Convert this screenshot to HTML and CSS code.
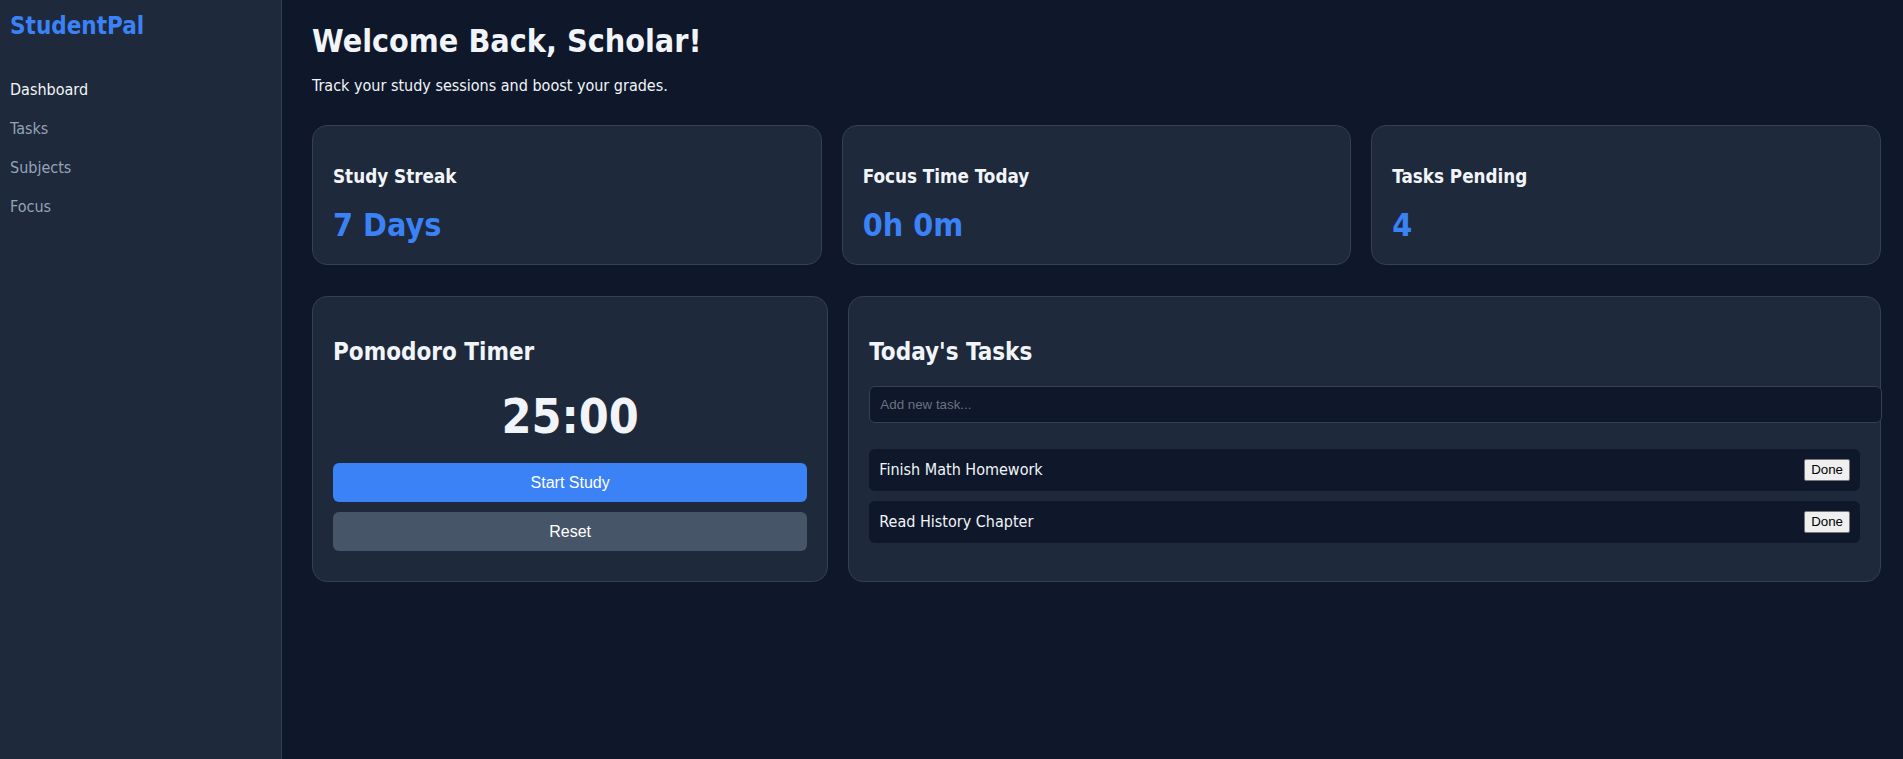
FILE: index.html
```html
<!DOCTYPE html>
<html lang="en">
<head>
<meta charset="UTF-8">
<title>StudentPal</title>
<link rel="stylesheet" href="styles.css">
</head>
<body>
<aside class="sidebar">
  <h2 class="logo">StudentPal</h2>
  <nav class="nav">
    <a class="nav-link active" href="#">Dashboard</a>
    <a class="nav-link" href="#">Tasks</a>
    <a class="nav-link" href="#">Subjects</a>
    <a class="nav-link" href="#">Focus</a>
  </nav>
</aside>
<main class="main">
  <h1 class="title">Welcome Back, Scholar!</h1>
  <p class="subtitle">Track your study sessions and boost your grades.</p>

  <section class="stats">
    <div class="card">
      <h3 class="stat-label">Study Streak</h3>
      <div class="stat-value">7 Days</div>
    </div>
    <div class="card">
      <h3 class="stat-label">Focus Time Today</h3>
      <div class="stat-value">0h 0m</div>
    </div>
    <div class="card">
      <h3 class="stat-label">Tasks Pending</h3>
      <div class="stat-value">4</div>
    </div>
  </section>

  <section class="panels">
    <div class="card">
      <h2 class="card-title">Pomodoro Timer</h2>
      <div class="timer">25:00</div>
      <button class="btn btn-primary">Start Study</button>
      <button class="btn btn-secondary">Reset</button>
    </div>
    <div class="card">
      <h2 class="card-title">Today's Tasks</h2>
      <input class="task-input" type="text" placeholder="Add new task...">
      <ul class="task-list">
        <li class="task-item"><span>Finish Math Homework</span><button class="done-btn">Done</button></li>
        <li class="task-item"><span>Read History Chapter</span><button class="done-btn">Done</button></li>
      </ul>
    </div>
  </section>
</main>
</body>
</html>
```

FILE: styles.css
```css
* { box-sizing: border-box; }

body {
  margin: 0;
  display: flex;
  min-height: 100vh;
  background: #0f172a;
  color: #f1f5f9;
  font-family: "DejaVu Sans Condensed", "DejaVu Sans", sans-serif;
  font-stretch: semi-condensed;
}

.sidebar {
  width: 282px;
  flex-shrink: 0;
  background: #1e293b;
  border-right: 1px solid #334155;
  padding: 12px 10px;
}

.logo {
  margin: 0 0 30px;
  font-size: 24px;
  color: #3b82f6;
}

.nav {
  display: flex;
  flex-direction: column;
}

.nav-link {
  display: block;
  padding: 10px 0;
  font-size: 16px;
  color: #94a3b8;
  text-decoration: none;
}

.nav-link.active { color: #f1f5f9; }

.main {
  flex: 1;
  padding: 22px 22px 30px 30px;
  min-width: 0;
}

.title {
  margin: 0 0 16px;
  font-size: 32px;
}

.subtitle {
  margin: 0 0 30px;
  font-size: 16px;
}

.card {
  background: #1e293b;
  border: 1px solid #334155;
  border-radius: 15px;
  padding: 20px;
}

.stats {
  display: grid;
  grid-template-columns: repeat(3, 1fr);
  gap: 20px;
  margin-bottom: 31px;
}

.stat-label {
  margin: 20px 0 18.72px;
  font-size: 18.72px;
}

.stat-value {
  font-size: 32px;
  font-weight: bold;
  color: #3b82f6;
}

.panels {
  display: grid;
  grid-template-columns: 1fr 2fr;
  gap: 20px;
}

.card-title {
  margin: 21px 0 20px;
  font-size: 24px;
}

.timer {
  margin: 0 0 19px;
  padding-top: 2px;
  font-size: 48px;
  font-weight: bold;
  text-align: center;
}

.btn {
  display: block;
  width: 100%;
  margin-bottom: 10px;
  padding: 10px;
  border: none;
  border-radius: 6px;
  color: #fff;
  font-family: "Liberation Sans", Arial, sans-serif;
  font-size: 16px;
  line-height: 19px;
}

.btn-primary { background: #3b82f6; }
.btn-secondary { background: #475569; }

.task-input {
  display: block;
  box-sizing: content-box;
  width: 100%;
  margin: 0;
  padding: 10px;
  background: #0f172a;
  border: 1px solid #334155;
  border-radius: 6px;
  color: #f1f5f9;
  font-family: "Liberation Sans", Arial, sans-serif;
  font-size: 13.33px;
}

.task-input::placeholder { color: #6b7280; }

.task-list {
  list-style: none;
  margin: 26px 0 16px;
  padding: 0;
}

.task-item {
  display: flex;
  justify-content: space-between;
  align-items: center;
  margin-bottom: 10px;
  padding: 10px;
  background: #0f172a;
  border-radius: 6px;
  font-size: 16px;
}

.done-btn {
  font-family: "Liberation Sans", Arial, sans-serif;
  font-size: 13.33px;
  padding: 1px 6px;
  background: #efefef;
  color: #000;
  border: 1px solid #767676;
  border-radius: 2px;
  height: 22px;
}
```
